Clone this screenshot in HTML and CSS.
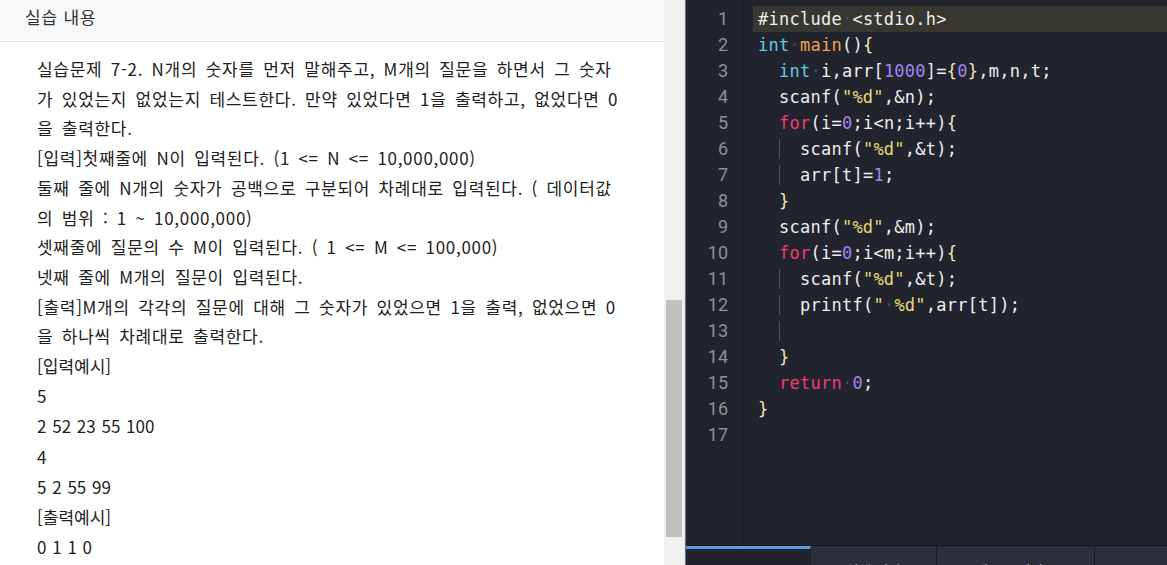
FILE: index.html
```html
<!DOCTYPE html>
<html lang="ko">
<head>
<meta charset="utf-8">
<title>실습 내용</title>
<link rel="stylesheet" href="styles.css">
</head>
<body>
<div class="app">
  <section class="left">
    <div class="left-main">
      <header class="head">실습 내용</header>
      <div class="content">
        <p>실습문제 7-2. N개의 숫자를 먼저 말해주고, M개의 질문을 하면서 그 숫자<br>가 있었는지 없었는지 테스트한다. 만약 있었다면 1을 출력하고, 없었다면 0<br>을 출력한다.</p>
        <p>[입력]첫째줄에 N이 입력된다. (1 &lt;= N &lt;= 10,000,000)</p>
        <p>둘째 줄에 N개의 숫자가 공백으로 구분되어 차례대로 입력된다. ( 데이터값<br>의 범위 : 1 ~ 10,000,000)</p>
        <p>셋째줄에 질문의 수 M이 입력된다. ( 1 &lt;= M &lt;= 100,000)</p>
        <p>넷째 줄에 M개의 질문이 입력된다.</p>
        <p>[출력]M개의 각각의 질문에 대해 그 숫자가 있었으면 1을 출력, 없었으면 0<br>을 하나씩 차례대로 출력한다.</p>
        <p class="ex">[입력예시]</p>
        <p class="ex">5</p>
        <p class="ex">2 52 23 55 100</p>
        <p class="ex">4</p>
        <p class="ex">5 2 55 99</p>
        <p class="ex">[출력예시]</p>
        <p class="ex">0 1 1 0</p>
      </div>
    </div>
    <div class="track"><div class="thumb"></div></div>
  </section>
  <div class="divider"></div>
  <section class="editor">
    <div class="code-area">
      <div class="gutter">
        <div>1</div><div>2</div><div>3</div><div>4</div><div>5</div><div>6</div><div>7</div><div>8</div><div>9</div><div>10</div><div>11</div><div>12</div><div>13</div><div>14</div><div>15</div><div>16</div><div>17</div>
      </div>
      <div class="code">
        <div class="ln active">#include<span class="ws">·</span>&lt;stdio.h&gt;</div>
        <div class="ln"><span class="ty">int</span><span class="ws">·</span><span class="fn">main</span>()<span class="br">{</span></div>
        <div class="ln">  <span class="ty">int</span><span class="ws">·</span>i,arr[<span class="nu">1000</span>]=<span class="br">{</span><span class="nu">0</span><span class="br">}</span>,m,n,t;</div>
        <div class="ln">  scanf(<span class="st">"%d"</span>,&amp;n);</div>
        <div class="ln">  <span class="kw">for</span>(i=<span class="nu">0</span>;i&lt;n;i++)<span class="br">{</span></div>
        <div class="ln">  <span class="guide">  </span>scanf(<span class="st">"%d"</span>,&amp;t);</div>
        <div class="ln">  <span class="guide">  </span>arr[t]=<span class="nu">1</span>;</div>
        <div class="ln">  <span class="br">}</span></div>
        <div class="ln">  scanf(<span class="st">"%d"</span>,&amp;m);</div>
        <div class="ln">  <span class="kw">for</span>(i=<span class="nu">0</span>;i&lt;m;i++)<span class="br">{</span></div>
        <div class="ln">  <span class="guide">  </span>scanf(<span class="st">"%d"</span>,&amp;t);</div>
        <div class="ln">  <span class="guide">  </span>printf(<span class="st">"<span class="ws">·</span>%d"</span>,arr[t]);</div>
        <div class="ln">  <span class="guide">  </span></div>
        <div class="ln">  <span class="br">}</span></div>
        <div class="ln">  <span class="kw">return</span><span class="ws">·</span><span class="nu">0</span>;</div>
        <div class="ln"><span class="br">}</span></div>
        <div class="ln"></div>
      </div>
    </div>
    <div class="tabs">
      <div class="tab on"></div>
      <div class="tab t2">실행 결과</div>
      <div class="tab t3">테스트 케이스</div>
      <div class="tab t4"></div>
    </div>
  </section>
</div>
</body>
</html>
```
FILE: styles.css
```css
* { box-sizing: border-box; }
html, body { margin: 0; padding: 0; height: 100%; overflow: hidden; }
body { background: #ffffff; }
.app { display: flex; height: 565px; width: 1167px; }

.left { display: flex; width: 684px; flex: none; background: #fff; }
.left-main { flex: 1; display: flex; flex-direction: column; min-width: 0; }
.head {
  height: 42px; flex: none;
  background: #f7f8f9; border-bottom: 1px solid #e4e6e8;
  padding: 6px 0 0 25px;
  font-family: "Noto Sans CJK KR", sans-serif; font-size: 17px; color: #333;
  letter-spacing: 0.8px; line-height: 22px;
}
.content {
  padding: 12px 0 0 37px;
  font-family: "Noto Sans CJK KR", sans-serif;
  font-size: 17px; color: #222; line-height: 29.7px;
  letter-spacing: 0.7px; word-spacing: 3px;
  white-space: nowrap;
}
.content p { margin: 0; }
.content p.ex { line-height: 30.2px; letter-spacing: 0; word-spacing: 1px; }

.track { width: 20px; flex: none; background: #f1f1f1; padding: 300px 2px 0 2px; }
.thumb { height: 237px; background: #c1c1c1; }

.divider { width: 2px; flex: none; background: #e6e6e6; border-right: 1px solid #6b7080; }

.editor { flex: 1; display: flex; flex-direction: column; background: #22242d; min-width: 0; }
.code-area { flex: 1; display: flex; min-height: 0; overflow: hidden; }
.gutter {
  width: 57px; flex: none; border-right: 1px solid #171920;
  padding: 6px 14px 0 0; text-align: right;
  font-family: Roboto, "DejaVu Sans", sans-serif; font-size: 18px; line-height: 26px;
  color: #8b9099;
}
.code {
  flex: 1; padding: 6px 0 0 10px;
  font-family: "DejaVu Sans Mono", monospace; font-size: 17px; line-height: 26px;
  letter-spacing: 0.25px; color: #eeeeee;
}
.ln { height: 26px; padding-left: 5px; white-space: pre; }
.ln.active { background: #37372f; }
.ws { color: #4a4d57; }
.ty { color: #5fc9e8; }
.fn { color: #f2a24c; }
.kw { color: #ee3d6e; }
.nu { color: #a283f0; }
.st { color: #e8d878; }
.br { color: #f3e5bb; }
.guide { box-shadow: inset 1px 0 0 #485372; }

.tabs { height: 20px; flex: none; display: flex; border-top: 1px solid #16181e; background: #22242d; }
.tab {
  background: #2b2f3b; border-right: 1px solid #1a1c22;
  font-family: "Noto Sans CJK KR", sans-serif; font-size: 14px; color: #d0d3da;
  padding-top: 14px; line-height: 20px; text-align: center; overflow: hidden; white-space: nowrap;
}
.tab.on { width: 125px; background: #22242d; border-top: 3px solid #5b9be0; }
.tab.t2 { width: 126px; }
.tab.t3 { width: 158px; }
.tab.t4 { flex: 1; border-right: none; }
```
